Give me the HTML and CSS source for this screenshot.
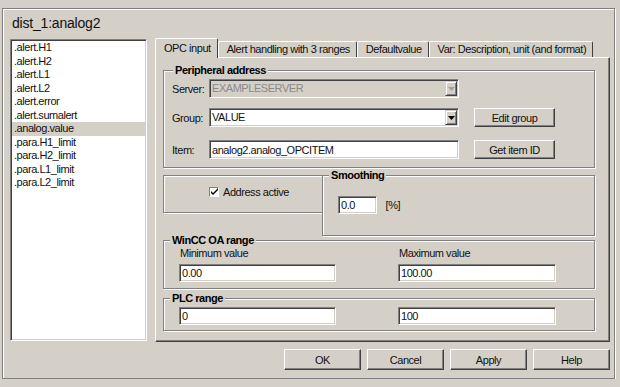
FILE: index.html
```html
<!DOCTYPE html>
<html lang="en">
<head>
    <meta charset="UTF-8">
    <title>dist_1:analog2</title>
    <link rel="stylesheet" href="styles.css">
</head>
<body>

<div class="window">
    <div class="frame">
        <div class="title">dist_1:analog2</div>

        <div class="main">
            <ul class="dp-list">
                <li>.alert.H1</li>
                <li>.alert.H2</li>
                <li>.alert.L1</li>
                <li>.alert.L2</li>
                <li>.alert.error</li>
                <li>.alert.sumalert</li>
                <li class="selected">.analog.value</li>
                <li>.para.H1_limit</li>
                <li>.para.H2_limit</li>
                <li>.para.L1_limit</li>
                <li>.para.L2_limit</li>
            </ul>

            <div class="tabs">
                <div class="tabbar">
                    <div class="tab active">OPC input</div>
                    <div class="tab">Alert handling with 3 ranges</div>
                    <div class="tab">Defaultvalue</div>
                    <div class="tab">Var: Description, unit (and format)</div>
                </div>

                <div class="tab-panel">
                    <fieldset class="group group-periph">
                        <legend>Peripheral address</legend>
                        <div class="form-row row-server">
                            <label>Server:</label>
                            <div class="combo disabled">
                                <span class="combo-text">EXAMPLESERVER</span>
                                <span class="combo-arrow">
                                    <svg width="7" height="4" viewBox="0 0 7 4"><path d="M0 0h7L3.5 4z" fill="#a0a0a0"/></svg>
                                </span>
                            </div>
                        </div>
                        <div class="form-row row-group">
                            <label>Group:</label>
                            <div class="combo">
                                <span class="combo-text">VALUE</span>
                                <span class="combo-arrow">
                                    <svg width="7" height="4" viewBox="0 0 7 4"><path d="M0 0h7L3.5 4z" fill="#000"/></svg>
                                </span>
                            </div>
                            <button class="btn btn-side">Edit group</button>
                        </div>
                        <div class="form-row">
                            <label>Item:</label>
                            <input class="field field-wide" value="analog2.analog_OPCITEM">
                            <button class="btn btn-side">Get item ID</button>
                        </div>
                    </fieldset>

                    <div class="mid-row">
                        <div class="addr-box">
                            <span class="check">
                                <svg width="7" height="7" viewBox="0 0 7 7"><path d="M0 3l2 2 5-5v2L2 7 0 5z" fill="#000"/></svg>
                            </span>
                            <span>Address active</span>
                        </div>
                        <fieldset class="group group-smooth">
                            <legend>Smoothing</legend>
                            <input class="field field-small" value="0.0">
                            <span class="unit">[%]</span>
                        </fieldset>
                    </div>

                    <fieldset class="group group-range">
                        <legend>WinCC OA range</legend>
                        <div class="range-grid">
                            <span class="range-label">Minimum value</span>
                            <span class="range-label">Maximum value</span>
                            <input class="field" value="0.00">
                            <input class="field" value="100.00">
                        </div>
                    </fieldset>

                    <fieldset class="group group-plc">
                        <legend>PLC range</legend>
                        <div class="range-grid">
                            <input class="field" value="0">
                            <input class="field" value="100">
                        </div>
                    </fieldset>
                </div>
            </div>
        </div>

        <div class="actions">
            <button class="btn btn-action">OK</button>
            <button class="btn btn-action">Cancel</button>
            <button class="btn btn-action">Apply</button>
            <button class="btn btn-action">Help</button>
        </div>
    </div>
</div>

</body>
</html>
```

FILE: styles.css
```css
* {
    box-sizing: border-box;
}
body {
    margin: 0;
    background: #d4d0c8;
    font-family: "Liberation Sans", Arial, sans-serif;
    font-size: 11px;
    letter-spacing: -0.45px;
    color: #111;
}
.window {
    padding: 8px 5px 0 2px;
}
.frame {
    border: 1px solid #808080;
    box-shadow: inset 1px 1px 0 #fff, 1px 1px 0 #fff;
    padding: 0 4px 8px 7px;
}
.title {
    height: 29px;
    line-height: 28px;
    font-size: 14px;
    letter-spacing: -0.2px;
    padding-left: 2px;
}
.main {
    display: flex;
    align-items: flex-start;
    gap: 8px;
}

/* data point list */
.dp-list {
    list-style: none;
    margin: 1px 0 0;
    padding: 1px;
    width: 137px;
    height: 302px;
    background: #fff;
    border: 1px solid;
    border-color: #808080 #fff #fff #808080;
    box-shadow: inset 1px 1px 0 #404040, inset -1px -1px 0 #d4d0c8;
}
.dp-list li {
    line-height: 13.5px;
    padding-left: 2px;
    white-space: nowrap;
}
.dp-list li.selected {
    background: #d4d0c8;
}

/* tabs */
.tabs {
    width: 455px;
}
.tabbar {
    display: flex;
    align-items: flex-end;
    height: 19px;
}
.tab {
    height: 16px;
    line-height: 13px;
    padding: 1px 6px 0 8px;
    border: 1px solid;
    border-bottom: 0;
    border-color: #fff #404040 transparent #fff;
    border-radius: 2px 2px 0 0;
    white-space: nowrap;
}
.tab.active {
    height: 20px;
    padding-top: 3px;
    margin-bottom: -1px;
    background: #d4d0c8;
    position: relative;
    z-index: 1;
}
.tab-panel {
    height: 285px;
    border: 1px solid;
    border-color: #fff #404040 #404040 #fff;
    box-shadow: inset -1px -1px 0 #808080;
    padding: 6px 14px 0 7px;
}

/* group boxes */
.group {
    margin: 0;
    min-width: 0;
    padding: 0 0 0 6px;
    border: 1px solid #808080;
    box-shadow: inset 1px 1px 0 #fff, 1px 1px 0 #fff;
}
.group legend {
    padding: 0 2px;
    font-weight: bold;
    line-height: 13px;
    background: #d4d0c8;
    color: #000;
}
.group-periph {
    padding: 2px 0 8px 8px;
}
.group-periph legend {
    margin-left: 1px;
}
.form-row {
    display: flex;
    align-items: center;
    height: 19px;
}
.form-row label {
    width: 37px;
}
.row-server {
    margin-bottom: 10px;
}
.row-group {
    margin-bottom: 13px;
}

/* inputs */
.field,
.combo {
    height: 19px;
    padding: 1px 1px 1px 2px;
    background: #fff;
    border: 1px solid;
    border-color: #808080 #fff #fff #808080;
    box-shadow: inset 1px 1px 0 #404040, inset -1px -1px 0 #d4d0c8;
    font: inherit;
    letter-spacing: inherit;
    color: #111;
    outline: none;
}
.field {
    height: 18px;
}
.field-wide {
    width: 250px;
    height: 19px;
}
.combo {
    display: flex;
    align-items: stretch;
    width: 250px;
    padding-left: 1px;
}
.combo-text {
    flex: 1;
    line-height: 15px;
    padding-left: 1px;
}
.combo-arrow {
    width: 12px;
    display: flex;
    align-items: center;
    justify-content: center;
    border: 1px solid;
    border-color: #d4d0c8 #404040 #404040 #d4d0c8;
    box-shadow: inset 1px 1px 0 #fff, inset -1px -1px 0 #808080;
    background: #d4d0c8;
}
.combo.disabled {
    background: #d4d0c8;
}
.combo.disabled .combo-text {
    color: #8a8a8a;
}

/* buttons */
.btn {
    padding: 0;
    background: #d4d0c8;
    border: 1px solid;
    border-color: #fff #404040 #404040 #fff;
    box-shadow: inset -1px -1px 0 #808080;
    font: inherit;
    letter-spacing: inherit;
    color: #111;
}
.btn-side {
    width: 81px;
    height: 19px;
    margin-left: 15px;
}

/* address / smoothing */
.mid-row {
    display: flex;
    align-items: flex-start;
    margin-top: 1px;
}
.addr-box {
    display: flex;
    align-items: center;
    gap: 4px;
    width: 160px;
    height: 38px;
    margin-top: 6px;
    padding: 0 0 5px 45px;
    border: 1px solid #808080;
    box-shadow: inset 1px 1px 0 #fff, 1px 1px 0 #fff;
}
.check {
    width: 10px;
    height: 10px;
    display: flex;
    align-items: center;
    justify-content: center;
    background: #fff;
    border: 1px solid;
    border-color: #808080 #fff #fff #808080;
}
.group-smooth {
    flex: 1;
    margin-left: -1px;
    padding: 14px 0 21px 6px;
}
.field-small {
    width: 39px;
    margin-left: 9px;
}
.unit {
    margin-left: 6px;
}

/* ranges */
.group-range {
    margin-top: -2px;
    padding-bottom: 6px;
}
.group-plc {
    margin-top: 3px;
    padding: 2px 0 5px 6px;
}
.range-grid {
    display: grid;
    grid-template-columns: 157px 158px;
    column-gap: 62px;
    row-gap: 4px;
    padding-left: 9px;
}
.range-label {
    line-height: 13px;
    padding-left: 1px;
}

/* dialog buttons */
.actions {
    display: flex;
    justify-content: flex-end;
    gap: 6px;
    margin-top: 7px;
}
.btn-action {
    width: 77px;
    height: 21px;
}
```
